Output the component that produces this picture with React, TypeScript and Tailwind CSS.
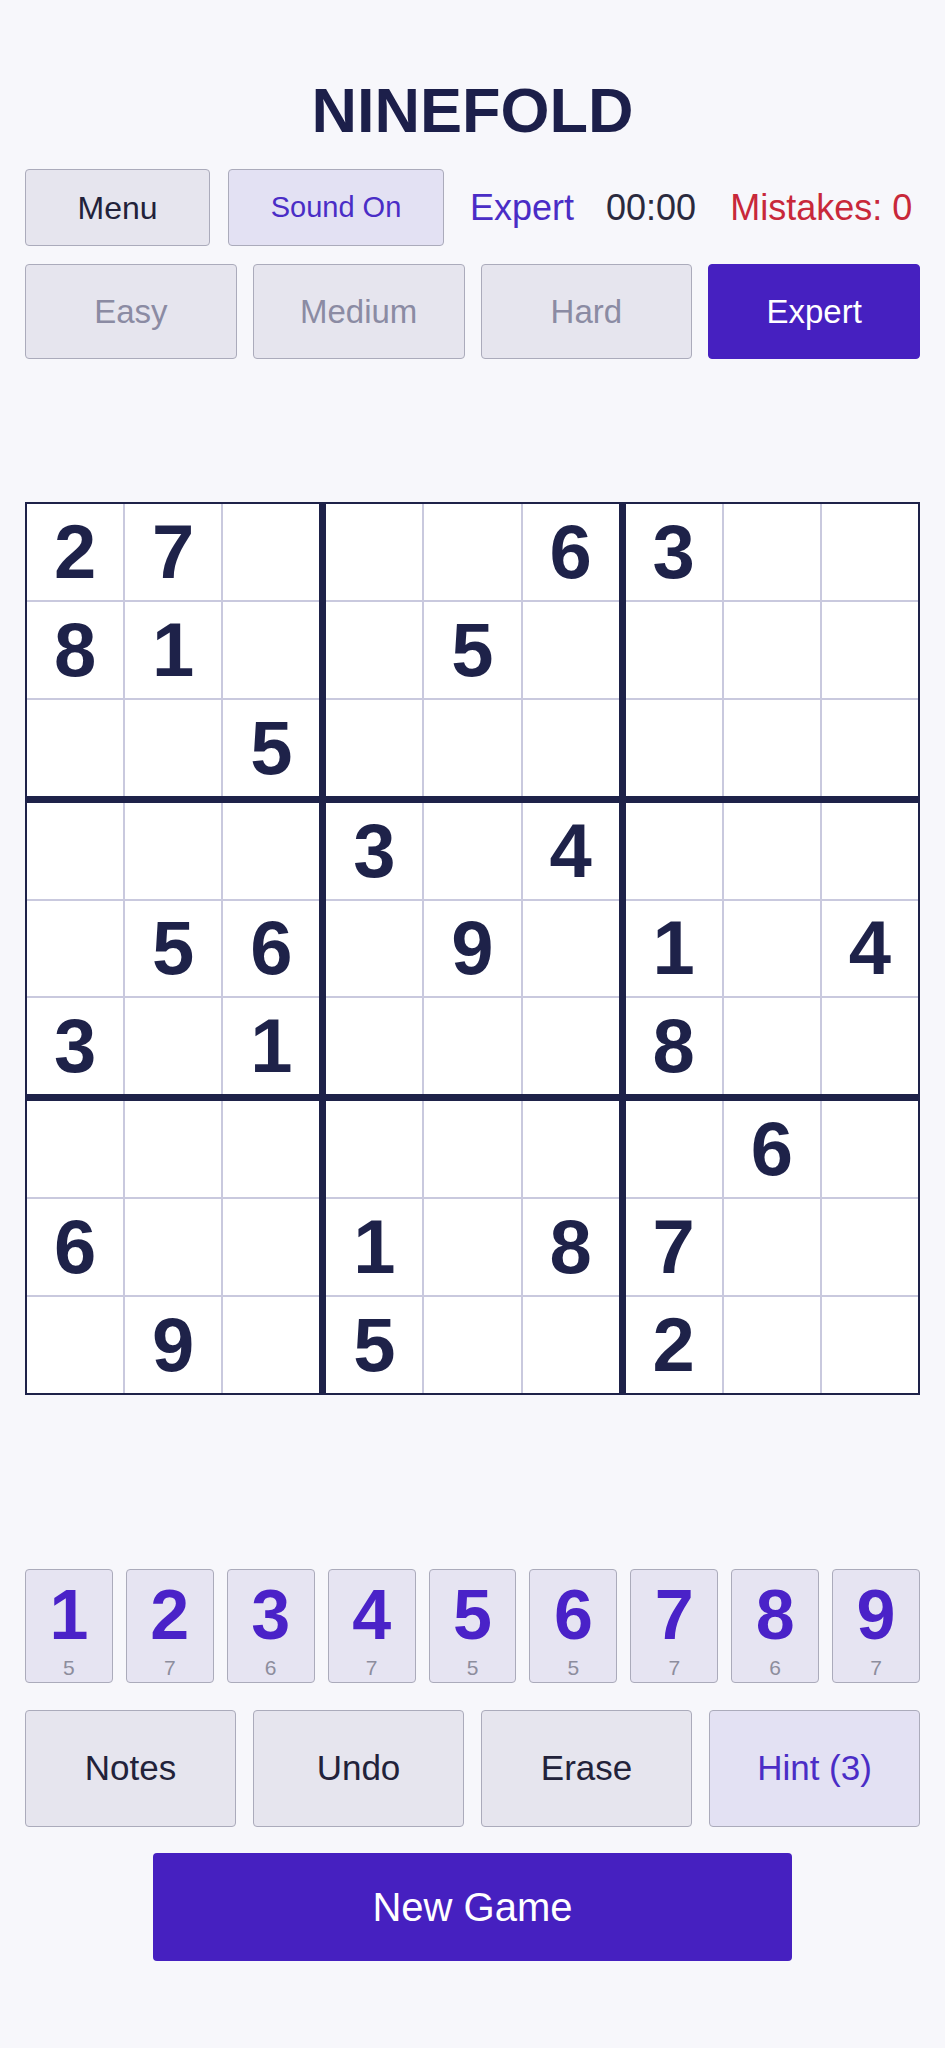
import React from "react";

const PUZZLE: number[][] = [
  [2, 7, 0, 0, 0, 6, 3, 0, 0],
  [8, 1, 0, 0, 5, 0, 0, 0, 0],
  [0, 0, 5, 0, 0, 0, 0, 0, 0],
  [0, 0, 0, 3, 0, 4, 0, 0, 0],
  [0, 5, 6, 0, 9, 0, 1, 0, 4],
  [3, 0, 1, 0, 0, 0, 8, 0, 0],
  [0, 0, 0, 0, 0, 0, 0, 6, 0],
  [6, 0, 0, 1, 0, 8, 7, 0, 0],
  [0, 9, 0, 5, 0, 0, 2, 0, 0],
];

const DIFFICULTIES = ["Easy", "Medium", "Hard", "Expert"];

function remaining(n: number) {
  let used = 0;
  PUZZLE.forEach((row) => row.forEach((v) => v === n && used++));
  return 9 - used;
}

function Box({ br, bc }: { br: number; bc: number }) {
  const cells = [];
  for (let r = 0; r < 3; r++) {
    for (let c = 0; c < 3; c++) {
      const v = PUZZLE[br * 3 + r][bc * 3 + c];
      cells.push(
        <div
          key={`${r}-${c}`}
          className="bg-white flex items-center justify-center text-[76px] font-bold leading-none text-[#1e2249]"
        >
          {v ? v : ""}
        </div>
      );
    }
  }
  return <div className="grid grid-cols-3 grid-rows-3 gap-[2px] bg-[#c9c9de]">{cells}</div>;
}

export default function App() {
  return (
    <div
      className="min-h-screen bg-[#f7f7fb] px-[25px]"
      style={{ fontFamily: '"Liberation Sans", Arial, sans-serif' }}
    >
      <h1 className="pt-[79px] text-center text-[63px] font-bold leading-none text-[#1c1f4a]">
        NINEFOLD
      </h1>

      {/* status bar */}
      <div className="mt-[27px] flex items-center">
        <button className="h-[77px] w-[185px] rounded-[4px] border border-[#ababbb] bg-[#e6e5ee] text-[32px] text-[#22223a]">
          Menu
        </button>
        <button className="ml-[18px] h-[77px] w-[216px] rounded-[4px] border border-[#ababbb] bg-[#e3e1f3] text-[29px] text-[#4a2dc6]">
          Sound On
        </button>
        <span className="ml-[26px] text-[36px] text-[#4a2dc6]">Expert</span>
        <span className="ml-[32px] text-[36px] text-[#2a2a3e]">00:00</span>
        <span className="ml-[34px] text-[36px] text-[#c8283a]">Mistakes: 0</span>
      </div>

      {/* difficulty */}
      <div className="mt-[18px] grid grid-cols-4 gap-4">
        {DIFFICULTIES.map((d) => (
          <button
            key={d}
            className={
              d === "Expert"
                ? "h-[95px] rounded-[4px] border border-[#4620c0] bg-[#4620c0] text-[33px] text-white"
                : "h-[95px] rounded-[4px] border border-[#ababbb] bg-[#e6e5ee] text-[33px] text-[#8b8ba3]"
            }
          >
            {d}
          </button>
        ))}
      </div>

      {/* board */}
      <div className="mt-[143px] grid h-[893px] w-[895px] grid-cols-3 grid-rows-3 gap-[7px] border-2 border-[#1e2249] bg-[#1e2249]">
        {[0, 1, 2].map((br) =>
          [0, 1, 2].map((bc) => <Box key={`${br}-${bc}`} br={br} bc={bc} />)
        )}
      </div>

      {/* number pad */}
      <div className="mt-[174px] grid grid-cols-9 gap-[13px]">
        {[1, 2, 3, 4, 5, 6, 7, 8, 9].map((n) => (
          <button
            key={n}
            className="flex h-[114px] flex-col items-center rounded-[4px] border border-[#ababbb] bg-[#e6e4f2] pt-[10px]"
          >
            <span className="text-[70px] font-bold leading-none text-[#4a22c8]">{n}</span>
            <span className="mt-[7px] text-[21px] leading-none text-[#8d8d9d]">{remaining(n)}</span>
          </button>
        ))}
      </div>

      {/* actions */}
      <div className="mt-[27px] grid grid-cols-4 gap-[17px]">
        {["Notes", "Undo", "Erase"].map((a) => (
          <button
            key={a}
            className="h-[117px] rounded-[4px] border border-[#ababbb] bg-[#e6e5ee] text-[35px] text-[#22223a]"
          >
            {a}
          </button>
        ))}
        <button className="h-[117px] rounded-[4px] border border-[#ababbb] bg-[#e3e1f3] text-[35px] text-[#4a2dc6]">
          Hint (3)
        </button>
      </div>

      <div className="mt-[26px] flex justify-center pb-[87px]">
        <button className="h-[108px] w-[639px] rounded-[4px] bg-[#4620c0] text-[40px] text-white">
          New Game
        </button>
      </div>
    </div>
  );
}
